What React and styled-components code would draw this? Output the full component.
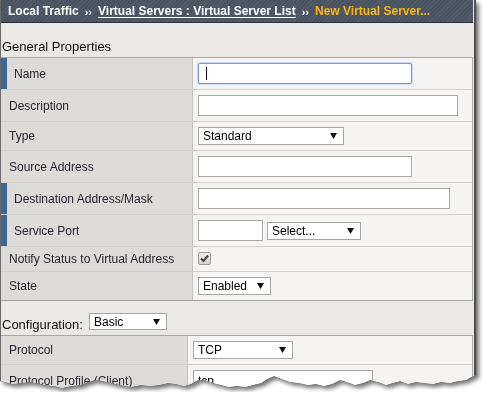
import React from 'react'
import styled, { createGlobalStyle } from 'styled-components'

const GlobalStyle = createGlobalStyle`
    *, *::before, *::after { box-sizing: border-box; }
    html, body {
        margin: 0;
        background: #fff;
    }
    body {
        font-family: "Liberation Sans", Arial, sans-serif;
        font-size: 12px;
        color: #222;
    }
`

// ragged bottom edge of the cut-out screenshot, right to left
const TEAR = [
    [476, 375], [471, 377], [466, 380], [458, 381], [450, 383], [441, 382], [433, 384],
    [424, 383], [416, 382], [408, 384], [400, 381], [393, 383], [386, 385], [378, 382],
    [370, 380], [363, 383], [355, 385], [347, 382], [340, 380], [332, 384], [324, 386],
    [316, 384], [308, 385], [299, 383], [290, 382], [282, 379], [274, 376], [267, 379],
    [261, 383], [253, 385], [245, 387], [237, 386], [229, 387], [221, 385], [213, 383],
    [205, 380], [198, 380], [191, 384], [184, 386], [176, 384], [168, 383], [159, 385],
    [150, 386], [141, 385], [131, 387], [121, 385], [111, 383], [103, 381], [95, 380],
    [88, 382], [80, 385], [71, 386], [62, 388], [54, 386], [45, 385], [37, 383],
    [29, 382], [21, 383], [12, 384], [5, 382], [0, 381],
]
const tearClip = `polygon(0 0, 476px 0, ${TEAR.map(([x, y]) => `${x}px ${y}px`).join(', ')})`

const Arrow = () => (
    <svg width="7" height="6" viewBox="0 0 7 6">
        <polygon points="0,0 7,0 3.5,6" fill="#111" />
    </svg>
)

const App = () => {
    return (
        <>
            <GlobalStyle />
            <Frame>
                <Panel>
                    <Crumbs>
                        <Crumb>Local Traffic</Crumb>
                        <Sep>››</Sep>
                        <Crumb $link>Virtual Servers : Virtual Server List</Crumb>
                        <Sep>››</Sep>
                        <Crumb $current>New Virtual Server...</Crumb>
                    </Crumbs>

                    <SectionTitle>General Properties</SectionTitle>
                    <PropTable>
                        <Row $label={192} $h={32}>
                            <LabelCell $marked>Name</LabelCell>
                            <ValueCell>
                                <TextField $w={214} $focused><Caret /></TextField>
                            </ValueCell>
                        </Row>
                        <Row $label={192} $h={32}>
                            <LabelCell>Description</LabelCell>
                            <ValueCell><TextField $w={260} /></ValueCell>
                        </Row>
                        <Row $label={192} $h={29}>
                            <LabelCell>Type</LabelCell>
                            <ValueCell>
                                <Dropdown $w={146}>Standard<Arrow /></Dropdown>
                            </ValueCell>
                        </Row>
                        <Row $label={192} $h={32}>
                            <LabelCell>Source Address</LabelCell>
                            <ValueCell><TextField $w={214} /></ValueCell>
                        </Row>
                        <Row $label={192} $h={32}>
                            <LabelCell $marked>Destination Address/Mask</LabelCell>
                            <ValueCell><TextField $w={252} /></ValueCell>
                        </Row>
                        <Row $label={192} $h={32}>
                            <LabelCell $marked>Service Port</LabelCell>
                            <ValueCell>
                                <TextField $w={65} />
                                <Dropdown $w={94}>Select...<Arrow /></Dropdown>
                            </ValueCell>
                        </Row>
                        <Row $label={192} $h={25}>
                            <LabelCell>Notify Status to Virtual Address</LabelCell>
                            <ValueCell>
                                <CheckBox>
                                    <svg width="11" height="11" viewBox="0 0 11 11">
                                        <path d="M2 5.5 L4.5 8 L9 2.5" stroke="#444" strokeWidth="2" fill="none" />
                                    </svg>
                                </CheckBox>
                            </ValueCell>
                        </Row>
                        <Row $label={192} $h={29}>
                            <LabelCell>State</LabelCell>
                            <ValueCell>
                                <Dropdown $w={73}>Enabled<Arrow /></Dropdown>
                            </ValueCell>
                        </Row>
                    </PropTable>

                    <ConfigBar>
                        <span>Configuration:</span>
                        <Dropdown $w={78} $h={17}>Basic<Arrow /></Dropdown>
                    </ConfigBar>
                    <PropTable>
                        <Row $label={187} $h={29}>
                            <LabelCell>Protocol</LabelCell>
                            <ValueCell>
                                <Dropdown $w={100}>TCP<Arrow /></Dropdown>
                            </ValueCell>
                        </Row>
                        <Row $label={187} $h={32}>
                            <LabelCell>Protocol Profile (Client)</LabelCell>
                            <ValueCell>
                                <TextField $w={180}>tcp</TextField>
                            </ValueCell>
                        </Row>
                    </PropTable>
                </Panel>
            </Frame>
        </>
    )
}

export default App

const Frame = styled.div`
    width: 482px;
    filter: drop-shadow(0 0 0.6px rgba(0, 0, 0, 0.9)) drop-shadow(3px 3px 2px rgba(0, 0, 0, 0.55));
`

const Panel = styled.div`
    width: 476px;
    height: 392px;
    overflow: hidden;
    background: #e9e8e4;
    border-left: 1px solid #6a6a6a;
    border-right: 2px solid #4e4e4e;
    padding-right: 1px;
    clip-path: ${tearClip};
`

const Crumbs = styled.div`
    display: flex;
    align-items: center;
    height: 23px;
    padding-left: 7px;
    background-color: #4a5360;
    background-image: repeating-linear-gradient(
        135deg,
        rgba(255, 255, 255, 0.05) 0 1px,
        transparent 1px 3px
    );
    border-bottom: 1px solid #2c3238;
    font-size: 12px;
    font-weight: bold;
    white-space: nowrap;
`

const Crumb = styled.span`
    color: ${p => (p.$current ? '#f7b718' : '#fff')};
    text-decoration: ${p => (p.$link ? 'underline' : 'none')};
    text-underline-offset: 2px;
`

const Sep = styled.span`
    color: #fff;
    font-size: 11px;
    font-weight: bold;
    margin: 2px 6px 0 6px;
`

const SectionTitle = styled.div`
    display: flex;
    align-items: flex-end;
    height: 34px;
    padding: 0 0 3px 1px;
    font-size: 13px;
    line-height: 15px;
    color: #111;
`

const PropTable = styled.div`
    display: flex;
    flex-direction: column;
    border-top: 1px solid #a6a6a6;
    border-right: 1px solid #adadad;
`

const Row = styled.div`
    display: grid;
    grid-template-columns: ${p => p.$label}px 1fr;
    height: ${p => p.$h}px;
    border-bottom: 1px solid #d0cfcb;

    &:last-child {
        border-bottom-color: #a2a2a2;
    }
`

const LabelCell = styled.div`
    display: flex;
    align-items: center;
    background: #dcdbd7;
    border-right: 1px solid #c4c3bf;
    border-left: ${p => (p.$marked ? '6px solid #3b6797' : 'none')};
    padding-left: ${p => (p.$marked ? 7 : 8)}px;
    font-size: 12px;
    color: #2a2330;
    white-space: nowrap;
`

const ValueCell = styled.div`
    display: flex;
    align-items: center;
    gap: 4px;
    padding-left: 5px;
    background: #f5f4f2;
`

const TextField = styled.div`
    display: flex;
    align-items: center;
    width: ${p => p.$w}px;
    height: 21px;
    padding-left: 4px;
    background: #fff;
    border: 1px solid ${p => (p.$focused ? '#6f9be0' : '#a9a9a9')};
    border-radius: ${p => (p.$focused ? '2px' : '0')};
    box-shadow: ${p => (p.$focused ? '0 0 0 1px rgba(126, 166, 230, 0.35)' : 'none')};
    font-size: 12px;
    color: #000;
`

const Caret = styled.span`
    width: 1px;
    height: 13px;
    margin-left: 3px;
    background: #000;
`

const Dropdown = styled.div`
    display: flex;
    align-items: center;
    justify-content: space-between;
    width: ${p => p.$w}px;
    height: ${p => p.$h || 18}px;
    padding: 0 6px 0 4px;
    background: #fff;
    border: 1px solid #a6a6a6;
    font-size: 12px;
    line-height: 14px;
    color: #000;
`

const CheckBox = styled.span`
    display: flex;
    align-items: center;
    justify-content: center;
    width: 13px;
    height: 13px;
    margin-top: -2px;
    border: 1px solid #9c9c9c;
    border-radius: 2px;
    background: linear-gradient(#ebebeb, #d2d2d2);
`

const ConfigBar = styled.div`
    display: flex;
    align-items: flex-end;
    gap: 6px;
    height: 34px;
    padding: 0 0 3px 1px;
    font-size: 13px;
    line-height: 15px;
    color: #111;

    ${Dropdown} {
        margin-bottom: 2px;
    }
`
